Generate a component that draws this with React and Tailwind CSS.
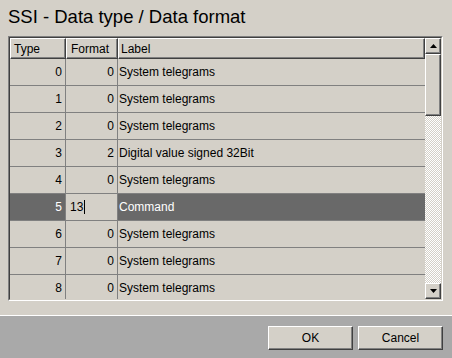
import React from "react";

const rows = [
  { t: 0, f: 0, l: "System telegrams" },
  { t: 1, f: 0, l: "System telegrams" },
  { t: 2, f: 0, l: "System telegrams" },
  { t: 3, f: 2, l: "Digital value signed 32Bit" },
  { t: 4, f: 0, l: "System telegrams" },
  { t: 5, f: 13, l: "Command", sel: true },
  { t: 6, f: 0, l: "System telegrams" },
  { t: 7, f: 0, l: "System telegrams" },
  { t: 8, f: 0, l: "System telegrams" },
];

function Raised({ className = "", children }) {
  return (
    <div className={"border-t border-l border-t-white border-l-white border-b border-r border-b-[#404040] border-r-[#404040] bg-[#d4d0c8] shadow-[inset_-1px_-1px_#808080] " + className}>
      {children}
    </div>
  );
}

function Arrow({ up }) {
  return (
    <svg width="7" height="4" viewBox="0 0 7 4">
      {up ? <polygon points="3.5,0 7,4 0,4" fill="#000" /> : <polygon points="0,0 7,0 3.5,4" fill="#000" />}
    </svg>
  );
}

export default function App() {
  return (
    <div className="w-[452px] h-[358px] bg-[#d4d0c8] flex flex-col font-['Liberation_Sans',Arial,sans-serif] text-black overflow-hidden">
      <div className="h-[36px] pl-[8px] pt-[6px] text-[18.5px] leading-[22px]">SSI - Data type / Data format</div>
      <div className="ml-[8px] w-[435px] h-[265px] border-t border-l border-t-[#808080] border-l-[#808080] border-b border-r border-b-white border-r-white">
        <div className="w-full h-full border-t border-l border-t-[#404040] border-l-[#404040] border-b border-r border-b-[#d4d0c8] border-r-[#d4d0c8] flex">
          <div className="flex-1 flex flex-col overflow-hidden text-[12px]">
            <div className="flex h-[21px] shrink-0">
              <Raised className="w-[56px] h-full pl-[3px] flex items-center">Type</Raised>
              <Raised className="w-[52px] h-full pl-[4px] flex items-center">Format</Raised>
              <Raised className="flex-1 h-full pl-[2px] flex items-center">Label</Raised>
            </div>
            {rows.map((r) => (
              <div key={r.t} className={"flex h-[27px] shrink-0 border-b border-[#808080] " + (r.sel ? "bg-[#696969] text-white" : "")}>
                <div className="w-[56px] h-full border-r border-[#808080] flex items-center justify-end pr-[3px]">{r.t}</div>
                {r.sel ? (
                  <div className="w-[52px] h-full border-r border-[#808080] bg-[#d4d0c8] text-black flex items-center pl-[4px]">
                    <span>{r.f}</span>
                    <span className="w-px h-[14px] bg-black ml-[1px]" />
                  </div>
                ) : (
                  <div className="w-[52px] h-full border-r border-[#808080] flex items-center justify-end pr-[3px]">{r.f}</div>
                )}
                <div className="flex-1 h-full flex items-center pl-[1px] whitespace-nowrap">{r.l}</div>
              </div>
            ))}
          </div>
          <div className="w-[16px] h-full flex flex-col shrink-0">
            <Raised className="h-[16px] shrink-0 flex items-center justify-center"><Arrow up /></Raised>
            <Raised className="h-[62px] shrink-0" />
            <div className="flex-1 bg-[image:repeating-conic-gradient(#ffffff_0%_25%,#d4d0c8_0%_50%)] bg-[length:2px_2px]" />
            <Raised className="h-[16px] shrink-0 flex items-center justify-center"><Arrow /></Raised>
          </div>
        </div>
      </div>
      <div className="h-[14px]" />
      <div className="flex-1 border-t border-white bg-[#a9a9a9] flex justify-end items-start pt-[10px] pr-[9px] gap-[5px]">
        <Raised className="w-[85px] h-[24px] flex items-center justify-center text-[12px]">OK</Raised>
        <Raised className="w-[85px] h-[24px] flex items-center justify-center text-[12px]">Cancel</Raised>
      </div>
    </div>
  );
}
